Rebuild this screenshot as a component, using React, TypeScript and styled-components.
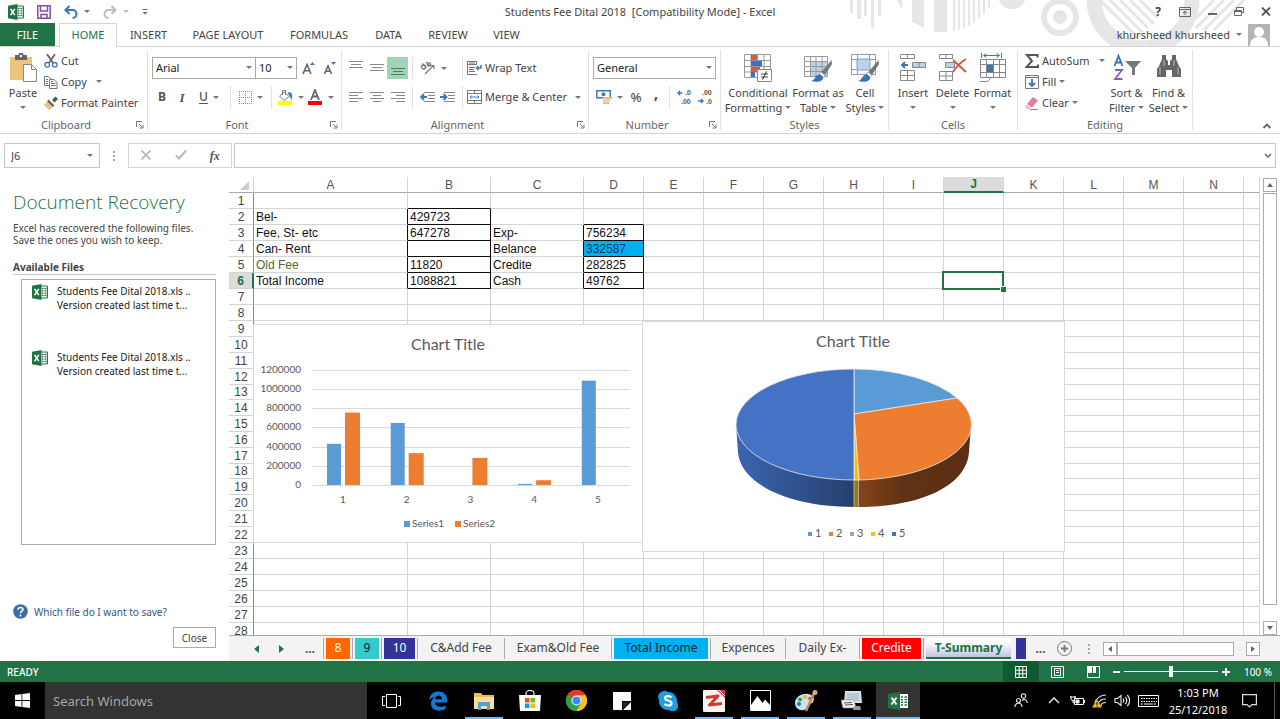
import React from "react";
import styled, { createGlobalStyle, css } from "styled-components";

const Global = createGlobalStyle`
  *, *::before, *::after { box-sizing: border-box; }
  body { margin: 0; background: #fff; color: #444; font: 11px/14px "Noto Sans", "Open Sans", sans-serif; }
  button, input, select { font: inherit; color: inherit; margin: 0; }
  button { border: 0; padding: 0; background: none; }
`;

const Page = styled.div`
  display: flex;
  flex-direction: column;
  height: 100vh;
  min-height: 480px;
  overflow: hidden;
`;

const Caret = styled.span<{ $light?: boolean }>`
  flex: none;
  width: 0;
  height: 0;
  border: 3px solid transparent;
  border-bottom-width: 0;
  border-top-color: ${(p) => (p.$light ? "#bbb" : "#777")};
`;

/* ---------- title bar ---------- */

const Header = styled.header`
  position: relative;
  flex: none;
  border-bottom: 1px solid #d4d4d4;
`;
const Pattern = styled.svg`
  position: absolute;
  top: 0;
  right: 0;
  width: 430px;
  height: 46px;
`;
const TitleBar = styled.div`
  position: relative;
  display: grid;
  grid-template-columns: 1fr auto 1fr;
  align-items: center;
  height: 23px;
`;
const QuickAccess = styled.div`
  display: flex;
  align-items: center;
  gap: 13px;
  padding-left: 8px;
  height: 20px;
`;
const ToolButton = styled.button`
  display: flex;
  align-items: center;
  gap: 6px;
`;
const WindowTitle = styled.h1`
  margin: 0;
  font-size: 11px;
  font-weight: 400;
  white-space: pre;
`;
const WindowButtons = styled.div`
  display: flex;
  justify-content: flex-end;
  align-items: center;
  gap: 11px;
  height: 22px;
  padding-right: 6px;
`;
const WinButton = styled.button`
  display: grid;
  place-items: center;
  width: 16px;
  height: 16px;
  font-size: 12px;
  font-weight: 700;
`;

/* ---------- ribbon tabs ---------- */

const TabRow = styled.nav`
  position: relative;
  display: flex;
  height: 23px;
`;
const FileTab = styled.button`
  width: 55px;
  margin-right: 4px;
  background: #217346;
  color: #fff;
`;
const RibbonTab = styled.button<{ $w: number; $on?: boolean }>`
  width: ${(p) => p.$w}px;
  white-space: nowrap;
  ${(p) =>
    p.$on &&
    css`
      padding-bottom: 2px;
      border: 1px solid #d4d4d4;
      border-bottom: 0;
      background: #fff;
      color: #217346;
      height: 24px;
    `}
`;
const Account = styled.div`
  display: flex;
  align-items: center;
  gap: 6px;
  margin-left: auto;
  padding-right: 10px;
`;

/* ---------- ribbon ---------- */

const Ribbon = styled.section`
  display: flex;
  flex: none;
  height: 87px;
  padding-top: 3px;
  border-bottom: 1px solid #d4d4d4;
`;
const Group = styled.div<{ $w: number }>`
  display: flex;
  flex-direction: column;
  flex: none;
  width: ${(p) => p.$w}px;
  height: 80px;
  border-right: 1px solid #e1e1e1;
`;
const GroupBody = styled.div<{ $pad?: number }>`
  display: flex;
  flex: 1;
  min-height: 0;
  padding-left: ${(p) => p.$pad || 0}px;
`;
const GroupLabel = styled.div`
  display: flex;
  align-items: center;
  flex: none;
  height: 10px;
  color: #666;
  text-align: center;
  span { flex: 1; }
  svg { margin: 0 3px 0 4px; }
`;
const Column = styled.div`
  display: flex;
  flex-direction: column;
`;
const ControlRows = styled(Column)`
  gap: 7px;
  padding-top: 7px;
`;
const Row = styled.div`
  display: flex;
  align-items: center;
  height: 22px;
`;
const Slot = styled.button<{ $w: number; $on?: boolean }>`
  display: flex;
  align-items: center;
  justify-content: center;
  gap: 5px;
  flex: none;
  width: ${(p) => p.$w}px;
  height: 22px;
  background: ${(p) => (p.$on ? "#9fd5b7" : "none")};
`;
const Sep = styled.span`
  flex: none;
  width: 1px;
  height: 22px;
  margin: 0 4px;
  background: #e1e1e1;
`;
const WideSep = styled(Sep)`
  margin-left: 13px;
`;
const LabelButton = styled.button`
  display: flex;
  align-items: center;
  gap: 3px;
  height: 21px;
  white-space: nowrap;
  svg { flex: none; }
`;
const FarCaret = styled(Caret)<{ $gap: number }>`
  margin-left: ${(p) => p.$gap}px;
`;
const BigButton = styled.button<{ $w: number }>`
  display: flex;
  flex-direction: column;
  align-items: center;
  flex: none;
  width: ${(p) => p.$w}px;
  height: 66px;
  line-height: 15px;
  white-space: nowrap;
  svg { flex: none; margin: 3px 0 2px; }
`;
const BigLine = styled.span`
  display: flex;
  align-items: center;
  gap: 3px;
  height: 15px;
`;
const Combo = styled.span<{ $w: number }>`
  position: relative;
  width: ${(p) => p.$w}px;
  height: 22px;
  & + & { margin-left: -1px; }
  select {
    appearance: none;
    width: 100%;
    height: 22px;
    padding: 0 3px;
    border: 1px solid #ababab;
    border-radius: 0;
    background: #fff;
    color: #222;
  }
  ${Caret} {
    position: absolute;
    right: 4px;
    top: 9px;
  }
`;
const Glyph = styled.span<{ $size?: number; $weight?: number; $raised?: boolean }>`
  font-size: ${(p) => p.$size || 12}px;
  font-weight: ${(p) => p.$weight || 700};
  padding-bottom: ${(p) => (p.$raised ? 8 : 0)}px;
  color: #555;
  i { font-family: "Liberation Serif", serif; }
  u { text-underline-offset: 2px; }
`;
const Collapse = styled.button`
  align-self: flex-end;
  margin: 0 8px 4px auto;
  display: flex;
`;

/* ---------- formula bar ---------- */

const FormulaBar = styled.section`
  display: flex;
  flex: none;
  align-items: center;
  height: 43px;
  padding: 0 4px;
`;
const NameBox = styled.label`
  display: flex;
  align-items: center;
  width: 96px;
  height: 25px;
  padding-right: 6px;
  border: 1px solid #c6c6c6;
  input { flex: 1; min-width: 0; border: 0; padding: 0 6px; background: none; }
`;
const Dots = styled.span`
  display: flex;
  flex-direction: column;
  align-items: center;
  gap: 2px;
  width: 28px;
  i { width: 2px; height: 2px; background: #aaa; }
`;
const FormulaTools = styled.div`
  display: flex;
  align-items: center;
  justify-content: space-around;
  width: 104px;
  height: 25px;
  border: 1px solid #d4d4d4;
`;
const FormulaField = styled.label`
  display: flex;
  align-items: center;
  flex: 1;
  height: 25px;
  margin-left: 2px;
  padding-right: 3px;
  border: 1px solid #c6c6c6;
  input { flex: 1; min-width: 0; border: 0; outline: 0; background: none; }
`;

/* ---------- work area ---------- */

const Work = styled.main`
  display: flex;
  flex: 1;
  min-height: 0;
`;
const Pane = styled.aside`
  display: flex;
  flex-direction: column;
  flex: none;
  width: 229px;
  padding: 13px 13px 13px;
`;
const PaneTitle = styled.h2`
  margin: 0 0 8px;
  color: #217346;
  font: 300 19px/24px "Open Sans", "Noto Sans", sans-serif;
`;
const PaneText = styled.p`
  margin: 0;
  font-size: 10px;
  line-height: 12px;
  white-space: nowrap;
`;
const PaneHead = styled.h3`
  margin: 14px 0 4px;
  border-bottom: 1px solid #c6c6c6;
  font-size: 10px;
  line-height: 14px;
  font-weight: 700;
`;
const FileList = styled.ul`
  display: flex;
  flex-direction: column;
  gap: 38px;
  height: 266px;
  margin: 0 0 0 8px;
  padding: 4px 10px;
  border: 1px solid #ababab;
  list-style: none;
  color: #222;
  font-size: 10px;
  line-height: 14px;
  white-space: nowrap;
  li { display: flex; gap: 9px; }
`;
const HelpLink = styled.a`
  display: flex;
  align-items: center;
  gap: 6px;
  margin-top: auto;
  margin-bottom: 8px;
  color: #2a5a8c;
  font-size: 10px;
  text-decoration: none;
`;
const CloseButton = styled.button`
  align-self: flex-end;
  width: 43px;
  height: 21px;
  border: 1px solid #ababab;
  background: #fdfdfd;
  font-size: 10px;
`;

const SheetArea = styled.div`
  display: flex;
  flex-direction: column;
  flex: 1;
  min-width: 0;
`;
const SheetRow = styled.div`
  display: flex;
  flex: 1;
  min-height: 0;
  border-bottom: 1px solid #ababab;
`;
const GridView = styled.div`
  position: relative;
  flex: 1;
  min-width: 0;
  overflow: hidden;
`;
const Grid = styled.table`
  width: 100%;
  table-layout: fixed;
  border-collapse: separate;
  border-spacing: 0;
  font: 12px/14px "Liberation Sans", Arial, sans-serif;
  color: #111;
`;
const ColHead = styled.th<{ $on?: boolean }>`
  height: 16px;
  padding: 0;
  border-right: 1px solid #d4d4d4;
  border-bottom: ${(p) => (p.$on ? "2px solid #217346" : "1px solid #ababab")};
  background: ${(p) => (p.$on ? "#dcdcdc" : "#fff")};
  color: ${(p) => (p.$on ? "#217346" : "#555")};
  font-weight: ${(p) => (p.$on ? 700 : 400)};
`;
const RowHead = styled.th<{ $on?: boolean; $h: number }>`
  height: ${(p) => p.$h}px;
  padding: 0;
  border-right: ${(p) => (p.$on ? "2px solid #217346" : "1px solid #8c8c8c")};
  border-bottom: 1px solid #d4d4d4;
  background: ${(p) => (p.$on ? "#dcdcdc" : "#fff")};
  color: ${(p) => (p.$on ? "#217346" : "#444")};
  font-weight: ${(p) => (p.$on ? 700 : 400)};
`;
const Cell = styled.td<{ $r?: boolean; $b?: boolean; $fill?: string; $ink?: string }>`
  position: relative;
  padding: 1px 0 0 2px;
  border-right: 1px solid ${(p) => (p.$r ? "#111" : "#d4d4d4")};
  border-bottom: 1px solid ${(p) => (p.$b ? "#111" : "#d4d4d4")};
  background: ${(p) => p.$fill || "none"};
  color: ${(p) => p.$ink || "#111"};
  white-space: nowrap;
`;
const Cursor = styled.span`
  position: absolute;
  z-index: 1;
  inset: -2px -1px -2px -2px;
  border: 2px solid #217346;
  &::after {
    content: "";
    position: absolute;
    right: -4px;
    bottom: -4px;
    width: 6px;
    height: 6px;
    border: solid #fff;
    border-width: 1px 0 0 1px;
    background: #217346;
  }
`;
const ChartFrame = styled.figure<{ $x: number; $y: number }>`
  position: absolute;
  left: ${(p) => p.$x}px;
  top: ${(p) => p.$y}px;
  margin: 0;
  border: 1px solid #d9d9d9;
  background: #fff;
  svg { display: block; }
  text { font-family: Lato, Carlito, sans-serif; fill: #595959; }
`;
const VScroll = styled.div`
  display: flex;
  flex-direction: column;
  align-items: center;
  flex: none;
  width: 20px;
  padding-top: 1px;
`;
const ScrollButton = styled.button`
  display: grid;
  place-items: center;
  flex: none;
  width: 14px;
  height: 14px;
  border: 1px solid #ababab;
  background: #fff;
`;
const VThumb = styled.div`
  width: 14px;
  flex: 1;
  margin: 1px 0 16px;
  border: 1px solid #ababab;
  background: #fff;
`;

/* ---------- sheet tabs ---------- */

const SheetTabs = styled.div`
  display: flex;
  align-items: center;
  flex: none;
  height: 25px;
  background: #f3f3f3;
`;
const TabNav = styled.div`
  display: flex;
  align-items: center;
  justify-content: space-between;
  width: 94px;
  padding: 0 8px 0 25px;
`;
const SheetTab = styled.button<{ $w: number; $bg?: string; $ink?: string; $on?: boolean; $line?: boolean }>`
  flex: none;
  width: ${(p) => p.$w}px;
  height: 21px;
  padding: 0 2px;
  border-left: 1px solid ${(p) => (p.$line === false ? "transparent" : "#ababab")};
  color: ${(p) => p.$ink || "#444"};
  font-size: 12px;
  line-height: 19px;
  white-space: nowrap;
  span {
    display: block;
    height: 21px;
    background: ${(p) => p.$bg || "none"};
  }
  ${(p) =>
    p.$on &&
    css`
      font-weight: 700;
      span { border-bottom: 2px solid #217346; }
    `}
`;
const HScroll = styled.div`
  display: flex;
  align-items: center;
  flex: 1;
  margin-right: 20px;
`;
const HThumb = styled.div`
  width: 117px;
  height: 14px;
  margin-right: auto;
  border: 1px solid #ababab;
  background: #fff;
`;

/* ---------- status bar ---------- */

const Status = styled.footer`
  display: flex;
  align-items: center;
  flex: none;
  height: 21px;
  padding: 0 8px 0 7px;
  background: #217346;
  color: #fff;
  font-size: 10px;
`;
const Ready = styled.span`
  margin-right: auto;
  font-weight: 500;
`;
const ViewButton = styled.button<{ $on?: boolean }>`
  display: grid;
  place-items: center;
  width: 36px;
  height: 21px;
  background: ${(p) => (p.$on ? "#0e5c2f" : "none")};
`;
const ZoomRange = styled.input`
  appearance: none;
  width: 94px;
  height: 11px;
  && { margin: 0 3px; }
  background: linear-gradient(#fff, #fff) center / 100% 1px no-repeat;
  &::-webkit-slider-thumb {
    appearance: none;
    width: 4px;
    height: 11px;
    background: #fff;
  }
`;
const ZoomLevel = styled.output`
  width: 41px;
  text-align: right;
`;

/* ---------- task bar ---------- */

const TaskBar = styled.footer`
  display: flex;
  align-items: stretch;
  flex: none;
  height: 37px;
  background: #000;
  color: #fff;
`;
const Start = styled.button`
  display: grid;
  place-items: center;
  width: 45px;
`;
const Search = styled.input`
  width: 322px;
  padding: 0 8px;
  border: 0;
  border-radius: 0;
  background: #333;
  && { font-size: 13px; }
  &::placeholder { color: #a6a6a6; opacity: 1; }
`;
const Task = styled.button<{ $open?: boolean; $on?: boolean }>`
  display: grid;
  place-items: center;
  width: 46px;
  border: solid transparent;
  border-width: 0 ${(p) => (p.$on ? 1 : 4)}px;
  background-color: ${(p) => (p.$on ? "#333" : "transparent")};
  background-image: ${(p) => (p.$open ? "linear-gradient(to top, #76b9ed 2px, transparent 2px)" : "none")};
  background-clip: padding-box;
`;
const TaskView = styled(Task)`
  width: 48px;
`;
const Tray = styled.div`
  display: flex;
  align-items: center;
  margin-left: auto;
`;
const TrayButton = styled.button<{ $w: number }>`
  display: grid;
  place-items: center;
  width: ${(p) => p.$w}px;
`;
const Clock = styled.time`
  width: 68px;
  text-align: center;
  line-height: 17px;
`;
const ShowDesktop = styled.span`
  align-self: stretch;
  width: 6px;
  margin-left: 8px;
  border-left: 1px solid #555;
`;

/* ---------- icons ---------- */

const ExcelIcon = () => (
  <svg width="16" height="16" viewBox="0 0 16 16">
    <path d="M8 2h7.500v12H8z" fill="#fff" stroke="#217346" />
    <path d="M10 4.500h1.500M12.500 4.500h2M10 6.800h1.500M12.500 6.800h2M10 9.200h1.500M12.500 9.200h2M10 11.500h1.500M12.500 11.500h2" stroke="#217346" strokeWidth="1.300" />
    <path d="M0 1.800 9.500 0v16L0 14.200z" fill="#217346" />
    <path d="m2.600 5 4.200 6.200M6.800 4.800 2.600 11.200" stroke="#fff" strokeWidth="1.500" />
  </svg>
);
const Launcher = () => (
  <svg width="8" height="8" viewBox="0 0 8 8" fill="none" stroke="#777">
    <path d="M.5 6V.5H6M3 3l3.500 3.500M7 3.500V7H3.500" />
  </svg>
);
const Lines = ({ rows, c = "#888" }: { rows: number[][]; c?: string }) => (
  <svg width="14" height="14" viewBox="0 0 14 14" stroke={c}>
    {rows.map(([x1, x2, y]) => (
      <path key={y} d={`M${x1} ${y + 0.5}H${x2}`} />
    ))}
  </svg>
);
const PasteIcon = () => (
  <svg width="28" height="30" viewBox="0 0 28 30">
    <path d="M1 4h22v23H1z" fill="#ecc57c" />
    <path d="M6 2h3.500a2.500 2.500 0 0 1 5 0H18v5H6z" fill="#666" />
    <circle cx="12" cy="3" r="1.200" fill="#fff" />
    <path d="M14.500 11.500h8l5 5v12h-13z" fill="#fff" stroke="#888" />
    <path d="M22.500 11.500v5h5" fill="none" stroke="#888" />
  </svg>
);
const CutIcon = () => (
  <svg width="14" height="14" viewBox="0 0 14 14" fill="none">
    <path d="M3 0l6 9M11 0 5 9" stroke="#666" strokeWidth="1.800" />
    <circle cx="3.200" cy="10.800" r="2.300" stroke="#3f7abf" strokeWidth="1.300" />
    <circle cx="10.800" cy="10.800" r="2.300" stroke="#3f7abf" strokeWidth="1.300" />
  </svg>
);
const CopyIcon = () => (
  <svg width="14" height="14" viewBox="0 0 14 14" fill="#fff" stroke="#777">
    <path d="M.5 1.500h4l3 3v6h-7z" />
    <path d="M5.500 4.500h4.500l3 3v6H5.500z" />
    <path d="M2 4.500h2M2 6.500h2M2 8.500h2M7 8.500h4.500M7 10.500h4.500M7 6.500h2" stroke="#3f7abf" />
  </svg>
);
const PainterIcon = () => (
  <svg width="14" height="14" viewBox="0 0 14 14">
    <path d="m8 4 3.500-3.500 2.500 2.500-3.500 3.500z" fill="#555" />
    <path d="m4.500 3.500 6 6-2 1.500-5.500-5.500z" fill="#666" />
    <path d="M3 6 8.500 11.500 5 14 0 9z" fill="#ecc07a" />
  </svg>
);
const BorderIcon = () => (
  <svg width="13" height="13" viewBox="0 0 13 13" stroke="#888" strokeDasharray="1 1">
    <path d="M.5 0v13M6.500 0v13M12.500 0v13M0 .5h13M0 6.500h13M0 12.500h13" />
  </svg>
);
const FillIcon = () => (
  <svg width="16" height="16" viewBox="0 0 16 16">
    <path d="m2.500 7 5-4 4.500 4.500-5 4z" fill="#fff" stroke="#777" />
    <path d="M5.500 6V1.500h3V6" fill="none" stroke="#777" />
    <path d="M11.500 3c4 .5 4.500 3.500 3 8C13 9 13 6 11 5z" fill="#3f7abf" />
    <path d="M1 12h14v4H1z" fill="#ff0" />
  </svg>
);
const FontColorIcon = () => (
  <svg width="16" height="16" viewBox="0 0 16 16">
    <path d="M4 11 8 1l4 10M5.500 7.500h5" fill="none" stroke="#666" strokeWidth="1.800" />
    <path d="M1 12h14v4H1z" fill="#f00" />
  </svg>
);
const FontSizeIcon = ({ down }: { down?: boolean }) => (
  <svg width="15" height="16" viewBox="0 0 15 16">
    <path d={down ? "M2.500 14 6 6l3.500 8M4 11.200h4" : "M2 14 6 4.500 10 14M3.500 10.700h5"} fill="none" stroke="#666" strokeWidth="1.600" />
    <path d={down ? "M9 2h5l-2.500 3z" : "M9 5h5l-2.500-3z"} fill="#3f7abf" />
  </svg>
);
const OrientIcon = () => (
  <svg width="16" height="14" viewBox="0 0 16 14" fill="none" stroke="#777">
    <circle cx="3.500" cy="6" r="2" strokeWidth="1.300" />
    <path d="m2.500 2.500 4 4M6 1l4 4" strokeWidth="1.300" />
    <circle cx="9" cy="3.500" r="1.600" strokeWidth="1.300" />
    <path d="m5 13 8-8M10.500 4.500H14V8" strokeWidth="1.200" />
  </svg>
);
const IndentIcon = ({ out }: { out?: boolean }) => (
  <svg width="16" height="12" viewBox="0 0 16 12" fill="none">
    <path d="M4 1.500h11M8 4.500h7M8 7.500h7M4 10.500h11" stroke="#888" />
    <path d={out ? "M7 6H1m3-3L1 6l3 3" : "M0 6h6M3.500 3l3 3-3 3"} stroke="#3f7abf" strokeWidth="1.800" />
  </svg>
);
const WrapIcon = () => (
  <svg width="15" height="14" viewBox="0 0 15 14" fill="none">
    <path d="M.5 0v14M9.500 0v4" stroke="#777" />
    <path d="M0 .5h10M0 3.500h10M0 13.500h10" stroke="#777" />
    <path d="M2 2h6M2 6.500h6M2 8.500h5M2 10.500h6" stroke="#3f7abf" />
    <path d="M14 4v3H9.500M11.500 5l-2 2 2 2" stroke="#3f7abf" strokeWidth="1.500" />
  </svg>
);
const MergeIcon = () => (
  <svg width="15" height="14" viewBox="0 0 15 14" fill="none">
    <path d="M.5.5h14v13H.5zM0 3.500h15M0 10.500h15M7.500 0v3.500M7.500 10.500V14" stroke="#777" />
    <path d="M3 7h9M4.500 5.500 3 7l1.500 1.500M10.500 5.500 12 7l-1.500 1.500" stroke="#3f7abf" />
  </svg>
);
const CurrencyIcon = () => (
  <svg width="16" height="16" viewBox="0 0 16 16" fill="none">
    <path d="M.8 1.800h13.500v7H.8z" stroke="#3f7abf" strokeWidth="1.500" />
    <circle cx="7.500" cy="5.200" r="2" fill="#3f7abf" />
    <path d="M7 9h9M7 11.500h7M7 14h6" stroke="#ecc07a" strokeWidth="2" />
  </svg>
);
const Decimal = ({ more }: { more?: boolean }) => (
  <svg width="17" height="20" viewBox="0 0 17 20" fill="none">
    <path d={more ? "M6.500 6H2m2-2L2 6l2 2" : "M1 14h5M4 12l2 2-2 2"} stroke="#3f7abf" strokeWidth="1.500" />
    <g fill="#555" fontSize="7" fontFamily="Liberation Sans, sans-serif" fontWeight="700">
      <text x={more ? 9 : 5} y="8">{more ? ".0" : ".00"}</text>
      <text x={more ? 5 : 9} y="17">{more ? ".00" : ".0"}</text>
    </g>
  </svg>
);
const CondIcon = () => (
  <svg width="28" height="30" viewBox="0 0 28 30">
    <path d="M.5 1.500h26v23H.5zM7 1.500v23M13.500 1.500v23M20 1.500v23M.5 7.500h26M.5 13.500h26M.5 19h26" fill="#fff" stroke="#999" />
    <path d="M7 2h6v5H7zM7 14h9v5H7z" fill="#d65a3f" />
    <path d="M7 8h11v5H7zM7 19h4v5H7z" fill="#3a74b8" />
    <path d="M13.500 16.500h14v12h-14z" fill="#fff" stroke="#888" />
    <path d="M17 21h7M17 24h7M22.500 18.500l-4 8" stroke="#444" strokeWidth="1.200" />
  </svg>
);
const Brush = () => (
  <>
    <path d="m27.500 7-10 12 3.500 3 7-11z" fill="#777" />
    <path d="m17 19 4 3.500-1.500 2-4-3.500z" fill="#fff" stroke="#888" strokeWidth=".6" />
    <path d="M15 21.500c2 0 4.500 2 4 4.500-2 3-7 3.500-12 2 4-1 4.500-6 8-6.500z" fill="#3a74b8" />
  </>
);
const TableStyleIcon = () => (
  <svg width="28" height="30" viewBox="0 0 28 30">
    <path d="M.5 3.500h23v20H.5z" fill="#fff" />
    <path d="M6 9h17v14H6z" fill="#bcd3ea" />
    <path d="M.5 3.500h23v20H.5zM6.500 3.500v20M12 3.500v20M18 3.500v20M.5 8.500h23M.5 13.500h23M.5 18.500h23" fill="none" stroke="#999" />
    <Brush />
  </svg>
);
const CellStyleIcon = () => (
  <svg width="28" height="30" viewBox="0 0 28 30">
    <path d="M.5 1.500h24v20H.5zM6.500 1.500v20M18.500 1.500v20M.5 6.500h24M.5 16.500h24" fill="#fff" stroke="#999" />
    <path d="M6 6h13v11H6z" fill="#bcd3ea" stroke="#7ba2cc" />
    <Brush />
  </svg>
);
const InsertIcon = () => (
  <svg width="26" height="30" viewBox="0 0 26 30" fill="#fff" stroke="#888">
    <path d="M.5 1.500h14v4H.5zM7.500 1.500v4M.5 17.500h14v10H.5zM.5 22.500h14M7.500 17.500v10" />
    <path d="M12.500 9.500h13v5h-13zM19 9.500v5" fill="#bcd3ea" />
    <path d="M8 12H2m3-3-3 3 3 3" fill="none" stroke="#3a74b8" strokeWidth="1.800" />
  </svg>
);
const DeleteIcon = () => (
  <svg width="28" height="30" viewBox="0 0 28 30" fill="#fff" stroke="#888">
    <path d="M.5 1.500h13v4H.5zM7 1.500v4M.5 18.500h13v9H.5zM.5 23h13M7 18.500v9" />
    <path d="M6.500 9.500h9v5h-9z" fill="#bcd3ea" />
    <path d="m14 7 13 12M27 6C22 9 17 14 14 19" fill="none" stroke="#d9583b" strokeWidth="2" />
  </svg>
);
const FormatIcon = () => (
  <svg width="28" height="30" viewBox="0 0 28 30" fill="#fff" stroke="#888">
    <path d="M1.500 6.500h25v18h-25zM7.500 6.500v18M14.500 6.500v18M20.500 6.500v18M1.500 11.500h25M1.500 19.500h25" />
    <path d="M8 12h6v7H8z" fill="#3a74b8" stroke="none" />
    <path d="M1 28.500h7c2 0 2-3 5-4h5" />
    <path d="M2.500 0v5M22.500 0v5M5 2.500h15M7.500.5l-3 2 3 2M17.500.5l3 2-3 2" fill="none" stroke="#3a74b8" />
  </svg>
);
const SigmaIcon = () => (
  <svg width="14" height="14" viewBox="0 0 14 14" fill="none" stroke="#555" strokeWidth="2">
    <path d="M12.500 3.500V1H2l5 6-5.500 6h11.500v-2.500" />
  </svg>
);
const FillDownIcon = () => (
  <svg width="14" height="14" viewBox="0 0 14 14" fill="none">
    <path d="M.5.500h13v13H.5zM.5 2.500h13" stroke="#777" />
    <path d="M7 4v7M4 8l3 3 3-3" stroke="#3a74b8" strokeWidth="1.800" />
  </svg>
);
const ClearIcon = () => (
  <svg width="14" height="14" viewBox="0 0 14 14">
    <path d="m8 1 5 3.500-6 7-5-3.500z" fill="#e87b93" />
    <path d="m1.500 8.500 4.500 3.300-1 1.200H2L.5 11z" fill="#f3b3c0" />
    <path d="M5 13.500h8" stroke="#888" />
  </svg>
);
const SortIcon = () => (
  <svg width="28" height="30" viewBox="0 0 28 30" fill="none">
    <path d="M1.500 13 5.500 3l4 10M3 9.500h5" stroke="#3a74b8" strokeWidth="1.800" />
    <path d="M2 17h7l-7 9h7.500" stroke="#8a5cb8" strokeWidth="1.800" />
    <path d="M12 8h16l-6 7v7h-3v-7z" fill="#777" />
  </svg>
);
const FindIcon = () => (
  <svg width="26" height="30" viewBox="0 0 26 30" fill="#666">
    <path d="M6 2h4v4l2 2v4h2V8l2-2V2h4v4l3 7 2 3v8h-9v-7h-6v7H1v-8l2-3 3-7z" />
    <path d="M4 14v8M22 14v8M8 7v6M18 7v6" stroke="#bbb" />
  </svg>
);

/* ---------- charts ---------- */

const seriesA = [429723, 647278, 0, 11820, 1088821];
const seriesB = [756234, 332587, 282825, 49762, 0];
const BLUE = "#5b9bd5";
const ORANGE = "#ed7d31";

function BarChart() {
  const base = 161;
  const size = (v: number) => (v / 1200000) * 115;
  return (
    <ChartFrame $x={24} $y={147}>
      <svg width="388" height="217" viewBox="1 1 388 217">
        <text x="195" y="26" fontSize="16" textAnchor="middle">Chart Title</text>
        {[0, 1, 2, 3, 4, 5, 6].map((i) => {
          const y = Math.round(base - i * 19.2);
          return (
            <g key={i}>
              <path d={`M59 ${y + 0.5}H377`} stroke="#d9d9d9" />
              <text x="48" y={y + 3} fontSize="10" textAnchor="end">{i * 200000}</text>
            </g>
          );
        })}
        {seriesA.map((a, i) => (
          <g key={i}>
            <rect x={74 + i * 63.7} y={base - size(a)} width="14" height={size(a)} fill={BLUE} />
            <rect x={92 + i * 63.7} y={base - size(seriesB[i])} width="15" height={size(seriesB[i])} fill={ORANGE} />
            <text x={90 + i * 63.7} y="179" fontSize="10" textAnchor="middle">{i + 1}</text>
          </g>
        ))}
        <rect x="151" y="197" width="6" height="6" fill={BLUE} />
        <text x="159" y="203" fontSize="10">Series1</text>
        <rect x="202" y="197" width="6" height="6" fill={ORANGE} />
        <text x="210" y="203" fontSize="10">Series2</text>
      </svg>
    </ChartFrame>
  );
}

function PieChart() {
  return (
    <ChartFrame $x={413} $y={144}>
      <svg width="421" height="229" viewBox="1 1 421 229">
        <defs>
          <linearGradient id="sideBlue">
            <stop offset="0" stopColor="#3c64b0" />
            <stop offset="1" stopColor="#25406f" />
          </linearGradient>
          <linearGradient id="sideOrange">
            <stop offset="0" stopColor="#86441a" />
            <stop offset=".4" stopColor="#5f3214" />
            <stop offset="1" stopColor="#5a2e12" />
          </linearGradient>
        </defs>
        <text x="211" y="26" fontSize="16" textAnchor="middle">Chart Title</text>
        <path d="M94 104 96 131C98 162 145 186 212 186V159z" fill="url(#sideBlue)" />
        <path d="M212 159h5v27h-5z" fill="#9a7a10" />
        <path d="M216 159v27C280 186 325 164 327 131L329 104z" fill="url(#sideOrange)" />
        <g stroke="#e8e8f0" strokeWidth=".8">
          <path d="M212 93V48A118 55.500 0 0 1 315 77z" fill={BLUE} />
          <path d="M212 93 315 77A118 55.500 0 0 1 217 159z" fill={ORANGE} />
          <path d="M212 93 217 159H212z" fill="#ffc000" />
          <path d="M212 93V159A118 55.500 0 0 1 212 48z" fill="#4472c4" />
        </g>
        <path d="M212 159v27M216.500 159v27" stroke="#c8c0a8" strokeWidth=".8" />
        {[BLUE, ORANGE, "#a5a5a5", "#ffc000", "#4472c4"].map((c, i) => (
          <g key={c}>
            <rect x={166 + i * 21} y="211" width="4" height="4" fill={c} />
            <text x={173 + i * 21} y="216" fontSize="11">{i + 1}</text>
          </g>
        ))}
      </svg>
    </ChartFrame>
  );
}

/* ---------- sheet ---------- */

const columns = "ABCDEFGHIJKLMN".split("");
const widths = [154, 83, 93, 60, 60, 60, 60, 60, 60, 60, 60, 60, 60, 60];
const shortRows = [13, 18];
const cells: Record<string, string> = {
  A2: "Bel-", A3: "Fee, St- etc", A4: "Can- Rent", A5: "Old Fee", A6: "Total Income",
  B2: "429723", B3: "647278", B5: "11820", B6: "1088821",
  C3: "Exp-", C4: "Belance", C5: "Credite", C6: "Cash",
  D3: "756234", D4: "332587", D5: "282825", D6: "49762",
};
const boxed = (c: string, r: number) => (c === "B" && r >= 2 && r <= 6) || (c === "D" && r >= 3 && r <= 6);
const nextCol: Record<string, string> = { A: "B", C: "D" };

function Sheet() {
  return (
    <Grid>
      <colgroup>
        <col style={{ width: 25 }} />
        {widths.map((w, i) => <col key={i} style={{ width: w }} />)}
        <col />
      </colgroup>
      <thead>
        <tr>
          <ColHead aria-label="Select all">
            <svg width="22" height="12" viewBox="0 0 22 12" display="block"><path d="M20 2v9h-9z" fill="#ccc" /></svg>
          </ColHead>
          {columns.map((c) => <ColHead key={c} scope="col" $on={c === "J"}>{c}</ColHead>)}
          <ColHead />
        </tr>
      </thead>
      <tbody>
        {Array.from({ length: 28 }, (_, i) => i + 1).map((r) => (
          <tr key={r}>
            <RowHead scope="row" $on={r === 6} $h={shortRows.includes(r) ? 15 : 16}>{r}</RowHead>
            {columns.map((c) => (
              <Cell
                key={c}
                $r={boxed(c, r) || boxed(nextCol[c], r)}
                $b={boxed(c, r) || boxed(c, r + 1)}
                $fill={c + r === "D4" ? "#00b0f0" : undefined}
                $ink={c + r === "A5" ? "#4f6b2f" : c + r === "D4" ? "#0b3a5c" : undefined}
              >
                {cells[c + r]}
                {c + r === "J6" && <Cursor />}
              </Cell>
            ))}
            <Cell />
          </tr>
        ))}
      </tbody>
    </Grid>
  );
}

const sheetTabs = [
  { t: "8", w: 29, bg: "#ff6600", ink: "#fff" },
  { t: "9", w: 29, bg: "#33cccc", ink: "#123" },
  { t: "10", w: 36, bg: "#333399", ink: "#fff" },
  { t: "C&Add Fee", w: 87 },
  { t: "Exam&Old Fee", w: 107 },
  { t: "Total Income", w: 99, bg: "#00b0f0", ink: "#123" },
  { t: "Expences", w: 75 },
  { t: "Daily Ex-", w: 74 },
  { t: "Credite", w: 64, bg: "#ff0000", ink: "#fff" },
  { t: "T-Summary", w: 90, bg: "linear-gradient(#fff 20%, #c3c3e2)", ink: "#217346", on: true },
  { t: "", w: 15, bg: "#333399", line: false },
];

const ribbonTabs = [
  { t: "HOME", w: 58, on: true },
  { t: "INSERT", w: 63 },
  { t: "PAGE LAYOUT", w: 96 },
  { t: "FORMULAS", w: 86 },
  { t: "DATA", w: 53 },
  { t: "REVIEW", w: 66 },
  { t: "VIEW", w: 51 },
];

const GroupFoot = ({ label, launch }: { label: string; launch?: boolean }) => (
  <GroupLabel>
    <span>{label}</span>
    {launch && <Launcher />}
  </GroupLabel>
);

export default function App() {
  return (
    <Page>
      <Global />
      <Header>
        <Pattern viewBox="0 0 430 46" aria-hidden="true">
          <g fill="#e6e6e6">
            <path d="M0 0h3v13H0zM7 0h4v19H7zM14 0h3v16h-3zM21 0h3v28h-3zM28 0h3v16h-3zM47 0h5v9zM62 0h12v28l-12-6zM84 0h13v32H84z" />
            <path d="M103 0h2v31h-2zM108 0h2v30h-2zM113 0h2v28h-2zM118 0h2v26h-2zM123 0h2v23h-2zM128 0h2v18h-2zM133 0h2v14h-2zM138 0h2v8h-2z" />
            <circle cx="162" cy="-5" r="14" />
          </g>
          <g fill="none" stroke="#e6e6e6">
            <circle cx="210" cy="17" r="16" strokeWidth="6" />
            <circle cx="293" cy="-1" r="49" strokeWidth="15" />
            <path d="m250 0 38 38M260 0l33 33M270 0l28 28M280 0l24 24M290 0l18 18M338 26 364 0M346 28 374 0M354 30 384 0M364 30 394 0" strokeWidth="3" />
          </g>
          <circle cx="210" cy="17" r="7" fill="#e6e6e6" />
        </Pattern>
        <TitleBar>
          <QuickAccess>
            <ExcelIcon />
            <ToolButton aria-label="Save">
              <svg width="14" height="14" viewBox="0 0 14 14" fill="none" stroke="#8250a8" strokeWidth="1.500"><path d="M.8.800h12.400v12.400H.8zM3.500 1v5h7V1M4 13V9.500h6V13" /></svg>
            </ToolButton>
            <ToolButton aria-label="Undo">
              <svg width="14" height="14" viewBox="0 0 14 14" fill="none" stroke="#3a74b8" strokeWidth="2"><path d="M1.500 5h7a4 4 0 0 1 0 8M5.500 1l-4 4 4 4" /></svg>
              <Caret />
            </ToolButton>
            <ToolButton aria-label="Redo">
              <svg width="14" height="14" viewBox="0 0 14 14" fill="none" stroke="#bbb" strokeWidth="2"><path d="M12.500 5h-7a4 4 0 0 0 0 8M8.500 1l4 4-4 4" /></svg>
              <Caret $light />
            </ToolButton>
            <ToolButton aria-label="Customize">
              <svg width="6" height="6" viewBox="0 0 6 6"><path d="M.5 0h5v1h-5zM.5 3h5L3 5.500z" fill="#666" /></svg>
            </ToolButton>
          </QuickAccess>
          <WindowTitle>{"Students Fee Dital 2018  [Compatibility Mode] - Excel"}</WindowTitle>
          <WindowButtons>
            <WinButton aria-label="Help">?</WinButton>
            <WinButton aria-label="Ribbon options">
              <svg width="12" height="10" viewBox="0 0 12 10" fill="none" stroke="#666"><path d="M.5.500h11v9H.5zM.5 2.500h11M6 8V4M4 6l2-2 2 2" /></svg>
            </WinButton>
            <WinButton aria-label="Minimize">
              <svg width="9" height="10" viewBox="0 0 9 10"><path d="M0 6h9v2H0z" fill="#666" /></svg>
            </WinButton>
            <WinButton aria-label="Restore">
              <svg width="10" height="9" viewBox="0 0 10 9" fill="none" stroke="#666"><path d="M2.500 3V.500h7v5H7.500M.5 3.500h7v5h-7zM.5 4.500h7" /></svg>
            </WinButton>
            <WinButton aria-label="Close">
              <svg width="10" height="9" viewBox="0 0 10 9" stroke="#555" strokeWidth="1.800"><path d="m1 .5 8 8M9 .5l-8 8" /></svg>
            </WinButton>
          </WindowButtons>
        </TitleBar>
        <TabRow>
          <FileTab>FILE</FileTab>
          {ribbonTabs.map((t) => <RibbonTab key={t.t} $w={t.w} $on={t.on}>{t.t}</RibbonTab>)}
          <Account>
            <span>khursheed khursheed</span>
            <Caret />
            <svg width="22" height="22" viewBox="0 0 22 22"><path d="M0 0h22v22H0z" fill="#b4b4b4" /><circle cx="11" cy="8" r="5" fill="#fff" /><path d="M2 22c0-6 3-9 9-9s9 3 9 9z" fill="#fff" /></svg>
          </Account>
        </TabRow>
      </Header>

      <Ribbon>
        <Group $w={148}>
          <GroupBody $pad={2}>
            <BigButton $w={42}>
              <PasteIcon />
              <BigLine>Paste</BigLine>
              <BigLine><Caret /></BigLine>
            </BigButton>
            <Column>
              <LabelButton><CutIcon />Cut</LabelButton>
              <LabelButton><CopyIcon />Copy<FarCaret $gap={6} /></LabelButton>
              <LabelButton><PainterIcon />Format Painter</LabelButton>
            </Column>
          </GroupBody>
          <GroupFoot label="Clipboard" launch />
        </Group>

        <Group $w={194}>
          <GroupBody $pad={4}>
            <ControlRows>
              <Row>
                <Combo $w={104}><select aria-label="Font"><option>Arial</option></select><Caret /></Combo>
                <Combo $w={42}><select aria-label="Font size"><option>10</option></select><Caret /></Combo>
                <Slot $w={22} aria-label="Grow font"><FontSizeIcon /></Slot>
                <Slot $w={20} aria-label="Shrink font"><FontSizeIcon down /></Slot>
              </Row>
              <Row>
                <Slot $w={20}><Glyph>B</Glyph></Slot>
                <Slot $w={20}><Glyph $size={13}><i>I</i></Glyph></Slot>
                <Slot $w={34}><Glyph $weight={500}><u>U</u></Glyph><Caret /></Slot>
                <Sep />
                <Slot $w={32} aria-label="Borders"><BorderIcon /><Caret /></Slot>
                <Sep />
                <Slot $w={28} aria-label="Fill color"><FillIcon /><Caret /></Slot>
                <Slot $w={32} aria-label="Font color"><FontColorIcon /><Caret /></Slot>
              </Row>
            </ControlRows>
          </GroupBody>
          <GroupFoot label="Font" launch />
        </Group>

        <Group $w={247}>
          <GroupBody $pad={4}>
            <ControlRows>
              <Row>
                <Slot $w={20} aria-label="Top"><Lines rows={[[0, 14, 0], [2, 12, 3], [0, 14, 6]]} /></Slot>
                <Slot $w={21} aria-label="Middle"><Lines rows={[[0, 14, 3], [2, 12, 6], [0, 14, 9]]} /></Slot>
                <Slot $w={21} $on aria-label="Bottom"><Lines c="#557a66" rows={[[0, 14, 7], [2, 12, 10], [0, 14, 13]]} /></Slot>
                <Sep />
                <Slot $w={32} aria-label="Orientation"><OrientIcon /><Caret /></Slot>
                <WideSep />
                <LabelButton><WrapIcon />Wrap Text</LabelButton>
              </Row>
              <Row>
                <Slot $w={20} aria-label="Left"><Lines rows={[[0, 14, 2], [0, 9, 5], [0, 14, 8], [0, 9, 11]]} /></Slot>
                <Slot $w={21} aria-label="Center"><Lines rows={[[0, 14, 2], [3, 11, 5], [0, 14, 8], [3, 11, 11]]} /></Slot>
                <Slot $w={21} aria-label="Right"><Lines rows={[[0, 14, 2], [5, 14, 5], [0, 14, 8], [5, 14, 11]]} /></Slot>
                <Sep />
                <Slot $w={21} aria-label="Decrease indent"><IndentIcon out /></Slot>
                <Slot $w={20} aria-label="Increase indent"><IndentIcon /></Slot>
                <Sep />
                <LabelButton><MergeIcon />Merge &amp; Center<FarCaret $gap={5} /></LabelButton>
              </Row>
            </ControlRows>
          </GroupBody>
          <GroupFoot label="Alignment" launch />
        </Group>

        <Group $w={132}>
          <GroupBody $pad={4}>
            <ControlRows>
              <Row>
                <Combo $w={123}><select aria-label="Number format"><option>General</option></select><Caret /></Combo>
              </Row>
              <Row>
                <Slot $w={32} aria-label="Currency"><CurrencyIcon /><Caret /></Slot>
                <Slot $w={22}><Glyph $size={13} $weight={500}>%</Glyph></Slot>
                <Slot $w={18}><Glyph $size={16} $raised>,</Glyph></Slot>
                <Sep />
                <Slot $w={21} aria-label="Increase decimal"><Decimal more /></Slot>
                <Slot $w={21} aria-label="Decrease decimal"><Decimal /></Slot>
              </Row>
            </ControlRows>
          </GroupBody>
          <GroupFoot label="Number" launch />
        </Group>

        <Group $w={168}>
          <GroupBody $pad={4}>
            <BigButton $w={66}><CondIcon /><BigLine>Conditional</BigLine><BigLine>Formatting<Caret /></BigLine></BigButton>
            <BigButton $w={54}><TableStyleIcon /><BigLine>Format as</BigLine><BigLine>Table<Caret /></BigLine></BigButton>
            <BigButton $w={40}><CellStyleIcon /><BigLine>Cell</BigLine><BigLine>Styles<Caret /></BigLine></BigButton>
          </GroupBody>
          <GroupFoot label="Styles" />
        </Group>

        <Group $w={129}>
          <GroupBody $pad={4}>
            <BigButton $w={40}><InsertIcon /><BigLine>Insert</BigLine><BigLine><Caret /></BigLine></BigButton>
            <BigButton $w={39}><DeleteIcon /><BigLine>Delete</BigLine><BigLine><Caret /></BigLine></BigButton>
            <BigButton $w={41}><FormatIcon /><BigLine>Format</BigLine><BigLine><Caret /></BigLine></BigButton>
          </GroupBody>
          <GroupFoot label="Cells" />
        </Group>

        <Group $w={175}>
          <GroupBody $pad={7}>
            <Column>
              <LabelButton><SigmaIcon />AutoSum<FarCaret $gap={6} /></LabelButton>
              <LabelButton><FillDownIcon />Fill<Caret /></LabelButton>
              <LabelButton><ClearIcon />Clear<Caret /></LabelButton>
            </Column>
            <BigButton $w={44}><SortIcon /><BigLine>Sort &amp;</BigLine><BigLine>Filter<Caret /></BigLine></BigButton>
            <BigButton $w={40}><FindIcon /><BigLine>Find &amp;</BigLine><BigLine>Select<Caret /></BigLine></BigButton>
          </GroupBody>
          <GroupFoot label="Editing" />
        </Group>
        <Collapse aria-label="Collapse ribbon">
          <svg width="10" height="6" viewBox="0 0 10 6" fill="none" stroke="#666" strokeWidth="1.800"><path d="m1.500 5 3.500-3.500L8.500 5" /></svg>
        </Collapse>
      </Ribbon>

      <FormulaBar>
        <NameBox><input aria-label="Name box" defaultValue="J6" /><Caret /></NameBox>
        <Dots><i /><i /><i /></Dots>
        <FormulaTools>
          <button aria-label="Cancel"><svg width="12" height="10" viewBox="0 0 12 10" stroke="#bbb" strokeWidth="1.800"><path d="m1.500.5 9 9M10.500.5l-9 9" /></svg></button>
          <button aria-label="Enter"><svg width="12" height="10" viewBox="0 0 12 10" fill="none" stroke="#bbb" strokeWidth="2.200"><path d="m1 5.500 3 3 7-8" /></svg></button>
          <button aria-label="Insert function"><Glyph><i>fx</i></Glyph></button>
        </FormulaTools>
        <FormulaField>
          <input aria-label="Formula" />
          <svg width="8" height="6" viewBox="0 0 8 6" fill="none" stroke="#666" strokeWidth="1.500"><path d="m1 1 3 3 3-3" /></svg>
        </FormulaField>
      </FormulaBar>

      <Work>
        <Pane>
          <PaneTitle>Document Recovery</PaneTitle>
          <PaneText>Excel has recovered the following files.<br />Save the ones you wish to keep.</PaneText>
          <PaneHead>Available Files</PaneHead>
          <FileList>
            {[0, 1].map((i) => (
              <li key={i}><ExcelIcon /><span>Students Fee Dital 2018.xls ..<br />Version created last time t...</span></li>
            ))}
          </FileList>
          <HelpLink href="#help">
            <svg width="15" height="15" viewBox="0 0 15 15"><circle cx="7.500" cy="7.500" r="7.300" fill="#3a6ea5" /><path d="M5 5.800c0-3 5-3 5-.3 0 1.700-2.500 1.800-2.500 3.700M7.500 10.500v2" fill="none" stroke="#fff" strokeWidth="1.600" /></svg>
            Which file do I want to save?
          </HelpLink>
          <CloseButton>Close</CloseButton>
        </Pane>
        <SheetArea>
          <SheetRow>
            <GridView>
              <Sheet />
              <BarChart />
              <PieChart />
            </GridView>
            <VScroll>
              <ScrollButton aria-label="Scroll up"><svg width="6" height="4" viewBox="0 0 6 4"><path d="M0 4h6L3 0z" fill="#666" /></svg></ScrollButton>
              <VThumb />
              <ScrollButton aria-label="Scroll down"><svg width="6" height="4" viewBox="0 0 6 4"><path d="M0 0h6L3 4z" fill="#666" /></svg></ScrollButton>
            </VScroll>
          </SheetRow>
          <SheetTabs>
            <TabNav>
              <svg width="5" height="8" viewBox="0 0 5 8"><path d="M5 0v8L0 4z" fill="#217346" /></svg>
              <svg width="5" height="8" viewBox="0 0 5 8"><path d="M0 0v8l5-4z" fill="#217346" /></svg>
              <Glyph>...</Glyph>
            </TabNav>
            {sheetTabs.map((s) => (
              <SheetTab key={s.t} $w={s.w} $bg={s.bg} $ink={s.ink} $on={s.on} $line={s.line}><span>{s.t}</span></SheetTab>
            ))}
            <Slot $w={25}><Glyph>...</Glyph></Slot>
            <Slot $w={22} aria-label="New sheet"><svg width="15" height="15" viewBox="0 0 15 15" fill="none" stroke="#777"><circle cx="7.500" cy="7.500" r="7" /><path d="M7.500 4v7M4 7.500h7" strokeWidth="1.800" /></svg></Slot>
            <Dots><i /><i /><i /></Dots>
            <HScroll>
              <ScrollButton aria-label="Scroll left"><svg width="4" height="6" viewBox="0 0 4 6"><path d="M4 0v6L0 3z" fill="#666" /></svg></ScrollButton>
              <HThumb />
              <ScrollButton aria-label="Scroll right"><svg width="4" height="6" viewBox="0 0 4 6"><path d="M0 0v6l4-3z" fill="#666" /></svg></ScrollButton>
            </HScroll>
          </SheetTabs>
        </SheetArea>
      </Work>

      <Status>
        <Ready>READY</Ready>
        <ViewButton $on aria-label="Normal"><svg width="12" height="12" viewBox="0 0 12 12" fill="none" stroke="#fff"><path d="M.5.500h11v11H.5zM4.200 0v12M7.800 0v12M0 4.200h12M0 7.800h12" /></svg></ViewButton>
        <ViewButton aria-label="Page layout"><svg width="13" height="12" viewBox="0 0 13 12" fill="none" stroke="#fff"><path d="M.5.500h12v11H.5zM3.500 2.500h6v7h-6zM5 4.500h3M5 6.500h3" /></svg></ViewButton>
        <ViewButton aria-label="Page break"><svg width="13" height="12" viewBox="0 0 13 12" fill="none" stroke="#fff"><path d="M0 0h5v7H0zM6 0h3v7H6z" fill="#fff" stroke="none" /><path d="M.5.500h12v11H.5z" /></svg></ViewButton>
        <Slot $w={10} aria-label="Zoom out"><svg width="7" height="2"><path d="M0 0h7v2H0z" fill="#fff" /></svg></Slot>
        <ZoomRange type="range" aria-label="Zoom" defaultValue={50} />
        <Slot $w={10} aria-label="Zoom in"><svg width="8" height="8"><path d="M3 0h2v3h3v2H5v3H3V5H0V3h3z" fill="#fff" /></svg></Slot>
        <ZoomLevel>100 %</ZoomLevel>
      </Status>

      <TaskBar>
        <Start aria-label="Start">
          <svg width="15" height="15" viewBox="0 0 15 15" fill="#fff"><path d="M0 2l6.500-1v6H0zM7.300.900 15 0v7H7.300zM0 8h6.500v6L0 13zM7.300 8H15v7l-7.700-1z" /></svg>
        </Start>
        <Search placeholder="Search Windows" aria-label="Search Windows" />
        <TaskView aria-label="Task view">
          <svg width="19" height="14" viewBox="0 0 19 14" fill="none" stroke="#fff"><path d="M4.500.5h10v13h-10zM3 2.500H.5v9H3M16 2.500h2.500v9H16" /></svg>
        </TaskView>
        <Task aria-label="Edge">
          <svg width="20" height="20" viewBox="0 0 20 20"><path d="M1 9C2 3 6 .5 10.500.5 16 .5 19 4 19 9v2.500H7c.3 4.500 6 5.500 10.500 3v3.500C10 21.500 3 19 3 12.500c0-3 2-5.500 4.500-6.500C4 6.500 2 8 1 9zm6.200-.7H14C14 3 7.500 3.500 7.200 8.300z" fill="#1478d4" /></svg>
        </Task>
        <Task $open aria-label="File Explorer">
          <svg width="20" height="18" viewBox="0 0 20 18"><path d="M0 1h7l1.500 2H20v14H0z" fill="#e6bf5a" /><path d="M0 5h20v12H0z" fill="#fbe08b" /><path d="M4 10h12v8h-3v-4H7v4H4z" fill="#4ba3d9" /></svg>
        </Task>
        <Task aria-label="Store">
          <svg width="22" height="22" viewBox="0 0 22 22"><path d="M7 6V3.500a4 3 0 0 1 8 0V6" fill="none" stroke="#fff" strokeWidth="1.200" /><path d="M0 5h22l-1 16H1z" fill="#fff" /><path d="M6 8h4.500v4.500H6z" fill="#f25022" /><path d="M11.500 8H16v4.500h-4.500z" fill="#7fba00" /><path d="M6 13.500h4.500V18H6z" fill="#00a4ef" /><path d="M11.500 13.500H16V18h-4.500z" fill="#ffb900" /></svg>
        </Task>
        <Task aria-label="Chrome">
          <svg width="21" height="21" viewBox="0 0 21 21"><circle cx="10.500" cy="10.500" r="10.500" fill="#fbc116" /><path d="M10.500 10.500 1.400 5.200A10.500 10.500 0 0 1 19.600 5.200z" fill="#e33b2e" /><path d="M1.400 5.200A10.500 10.500 0 0 0 10.500 21l5-8.500z" fill="#2ba24c" /><path d="M10.500 5.200h9.100A10.500 10.500 0 0 1 10.500 21l5-8z" fill="#fbc116" /><circle cx="10.500" cy="10.500" r="5" fill="#fff" /><circle cx="10.500" cy="10.500" r="4" fill="#4285f4" /></svg>
        </Task>
        <Task aria-label="Sticky notes">
          <svg width="18" height="18" viewBox="0 0 18 18"><path d="M0 0h18v18H0z" fill="#fff" /><path d="M9 9h9v1l-8 8H9z" fill="#000" /><path d="M10 16.500V10h6.500z" fill="#fff" opacity=".15" /></svg>
        </Task>
        <Task aria-label="Skype">
          <svg width="20" height="20" viewBox="0 0 20 20"><path d="M6 0a6 6 0 0 1 4 1 9 9 0 0 1 9 10.500A5.500 5.500 0 0 1 11 19 9 9 0 0 1 1 9 6 6 0 0 1 6 0z" fill="#1a9fe6" /><path d="M13.500 6.500C12 4.500 7 4.500 7 7.200c0 3 6.500 1.600 6.500 5 0 3-5.500 3-7 .5" fill="none" stroke="#fff" strokeWidth="2.200" /></svg>
        </Task>
        <Task $open aria-label="Zapya">
          <svg width="22" height="22" viewBox="0 0 22 22"><rect width="22" height="22" rx="1" fill="#f4f4f4" /><path d="M14 0h8v8z" fill="#d93b3b" /><path d="M16 0l6 6" stroke="#f4f4f4" /><path d="M3 7.500 15 6 6.500 15 19 13.500" fill="none" stroke="#e0322f" strokeWidth="3" strokeLinejoin="round" /></svg>
        </Task>
        <Task $open aria-label="Photos">
          <svg width="21" height="21" viewBox="0 0 21 21"><path d="M.5.500h20v20H.5z" fill="#000" stroke="#fff" /><path d="M1 15 7.500 6l5 7L15 9.500l5.500 6V20H1z" fill="#fff" /></svg>
        </Task>
        <Task $open aria-label="Paint">
          <svg width="24" height="22" viewBox="0 0 24 22"><path d="M1 13C1 7 8 3 14 4c6 1 7 5 5 8-1.500 2.500-4 1-5 3s0 4-4 5c-5 .8-9-2-9-7z" fill="#c9e2f1" /><circle cx="6" cy="9.500" r="2" fill="#3d9b45" /><circle cx="11" cy="7" r="2" fill="#f0b929" /><circle cx="5" cy="14" r="2" fill="#2f6fc0" /><circle cx="16" cy="8.500" r="1.800" fill="#d8463b" /><path d="M21 1 12 21" stroke="#c98b4a" strokeWidth="2.500" /><circle cx="21" cy="2.500" r="2.500" fill="#e0a868" /></svg>
        </Task>
        <Task $open aria-label="Scanner">
          <svg width="22" height="20" viewBox="0 0 22 20"><path d="M4 0h16l1 12H3z" fill="#d9e2e8" /><path d="M6 2h12l.8 8H5.400z" fill="#b5c9d6" /><path d="M0 9h13l2 8H2z" fill="#f1f1f1" stroke="#888" strokeWidth=".6" /><path d="m3 12 8-.5M4 14l8-.5" stroke="#555" /><path d="M13 15h6l1 4h-8z" fill="#999" /></svg>
        </Task>
        <Task $open $on aria-label="Excel">
          <svg width="20" height="18" viewBox="0 0 20 18"><path d="M11 2h9v14h-9z" fill="#fff" /><path d="M13 5h2M16.500 5H19M13 7.600h2M16.500 7.600H19M13 10.300h2M16.500 10.300H19M13 13h2M16.500 13H19" stroke="#217346" strokeWidth="1.400" /><path d="M0 2 12 0v18L0 16z" fill="#217346" /><path d="m3.500 5.500 5 7M8.500 5.500l-5 7" stroke="#fff" strokeWidth="1.800" /></svg>
        </Task>
        <Tray>
          <TrayButton $w={38} aria-label="People"><svg width="14" height="15" viewBox="0 0 14 15" fill="none" stroke="#ddd" strokeWidth="1.200"><circle cx="4.500" cy="7.500" r="2" /><path d="M1 14c0-5 7-5 7 0" /><circle cx="9.500" cy="3" r="2.200" /><path d="M8 7.500c2-2 5-1 5.300 2.500" /></svg></TrayButton>
          <TrayButton $w={28} aria-label="Hidden icons"><svg width="12" height="7" viewBox="0 0 12 7" fill="none" stroke="#ddd" strokeWidth="1.500"><path d="m1 6 5-5 5 5" /></svg></TrayButton>
          <TrayButton $w={18} aria-label="Battery"><svg width="15" height="11" viewBox="0 0 15 11" fill="none" stroke="#fff"><path d="M4.500 3.500h9v6h-9zM14.500 5v3" /><path d="M6 5h3v3H6z" fill="#fff" /><path d="M1 1v2.500a2 2 0 0 0 4 0V1M0 2h6M3 5v2.500h1.500" /></svg></TrayButton>
          <TrayButton $w={26} aria-label="Network"><svg width="15" height="14" viewBox="0 0 15 14" fill="none" stroke="#ddd" strokeWidth="1.200"><path d="M3 9c1-5 6-8 11-8M6 10c1-3 4-5 8-5M9 12c0-2 2-3.500 5-3.500" /><path d="M5 5.500 10 13.500H0z" fill="#f5b916" stroke="none" /><path d="M5 8v3M5 12v1" stroke="#222" /></svg></TrayButton>
          <TrayButton $w={20} aria-label="Volume"><svg width="16" height="13" viewBox="0 0 16 13" fill="none" stroke="#ddd" strokeWidth="1.200"><path d="M1 4.500h2.500L7 1.500v10l-3.500-3H1zM9 4.500c1 1.300 1 2.700 0 4M11.200 2.800c2 2.400 2 5 0 7.400M13.300 1c3 3.500 3 7.500 0 11" /></svg></TrayButton>
          <TrayButton $w={32} aria-label="Keyboard"><svg width="21" height="12" viewBox="0 0 21 12" fill="none" stroke="#fff"><path d="M.5.500h20v11H.5z" /><path d="M3 3.500h16M3 6.500h16" strokeDasharray="1.500 1" strokeWidth="1.200" /><path d="M3 9h2M6 9h9M16 9h2" /></svg></TrayButton>
          <Clock>1:03 PM<br />25/12/2018</Clock>
          <TrayButton $w={34} aria-label="Notifications"><svg width="15" height="14" viewBox="0 0 15 14" fill="none" stroke="#ddd" strokeWidth="1.200"><path d="M.6.600h13.800v10H10L7.500 13 5 10.600H.6z" /></svg></TrayButton>
          <ShowDesktop />
        </Tray>
      </TaskBar>
    </Page>
  );
}
